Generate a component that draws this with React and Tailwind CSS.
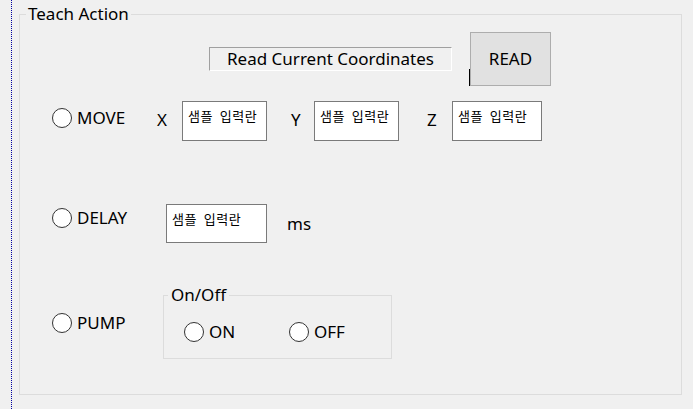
const font = { fontFamily: '"Noto Sans", "Noto Sans CJK KR", sans-serif' };

function Radio({ label, width }) {
  return (
    <div className={`flex h-[20px] items-center ${width}`}>
      <span className="h-[20px] w-[20px] shrink-0 rounded-full border border-[#333333] bg-white" />
      <span className="ml-[5px] leading-[20px]">{label}</span>
    </div>
  );
}

function Field({ width, height = 'h-[40px]' }) {
  return (
    <div
      className={`${width} ${height} shrink-0 border border-[#7a7a7a] bg-white pl-[5px] pt-[6px] text-[13px] leading-[16px] tracking-[0.6px] text-black [word-spacing:3px]`}
      style={{ fontFamily: '"Noto Sans CJK KR", "Noto Sans", sans-serif' }}
    >
      샘플 입력란
    </div>
  );
}

export default function App() {
  return (
    <div className="flex h-[409px] w-[693px] overflow-hidden bg-[#f0f0f0] text-[17px] text-black" style={font}>
      <div className="ml-[11px] h-full w-px border-l border-dotted border-[#0000a0]" />

      <fieldset className="ml-[7px] mt-[5px] h-[390px] w-[663px] border border-[#dcdcdc]">
        <legend className="ml-[6px] px-[2px] leading-[18px]">Teach Action</legend>

        <div className="flex flex-col pt-[9px]">
          {/* read coordinates */}
          <div className="flex items-start pl-[189px]">
            <div className="mt-[15px] flex h-[24px] w-[243px] items-center justify-center border border-b-white border-l-[#a0a0a0] border-r-white border-t-[#a0a0a0] leading-[20px]">
              Read Current Coordinates
            </div>
            <div className="ml-[17px] h-[17px] w-px self-end bg-black" />
            <button className="h-[54px] w-[81px] border border-[#adadad] bg-[#e1e1e1] leading-[20px]">READ</button>
          </div>

          {/* move */}
          <div className="mt-[15px] flex items-start pl-[32px]">
            <div className="mt-[7px]">
              <Radio label="MOVE" width="w-[105px]" />
            </div>
            <span className="mt-[9px] w-[25px] leading-[20px]">X</span>
            <Field width="w-[85px]" />
            <span className="ml-[24px] mt-[9px] w-[23px] leading-[20px]">Y</span>
            <Field width="w-[85px]" />
            <span className="ml-[28px] mt-[9px] w-[25px] leading-[20px]">Z</span>
            <Field width="w-[90px]" />
          </div>

          {/* delay */}
          <div className="mt-[63px] flex items-start pl-[32px]">
            <div className="mt-[4px]">
              <Radio label="DELAY" width="w-[114px]" />
            </div>
            <Field width="w-[101px]" height="h-[39px]" />
            <span className="ml-[20px] mt-[10px] leading-[20px]">ms</span>
          </div>

          {/* pump */}
          <div className="mt-[43px] flex items-start pl-[32px]">
            <div className="mt-[27px]">
              <Radio label="PUMP" width="w-[111px]" />
            </div>
            <fieldset className="h-[73px] w-[229px] border border-[#dcdcdc]">
              <legend className="ml-[4px] px-[3px] leading-[18px]">On/Off</legend>
              <div className="flex pl-[20px] pt-[18px]">
                <Radio label="ON" width="w-[105px]" />
                <Radio label="OFF" width="w-[80px]" />
              </div>
            </fieldset>
          </div>
        </div>
      </fieldset>
    </div>
  );
}
